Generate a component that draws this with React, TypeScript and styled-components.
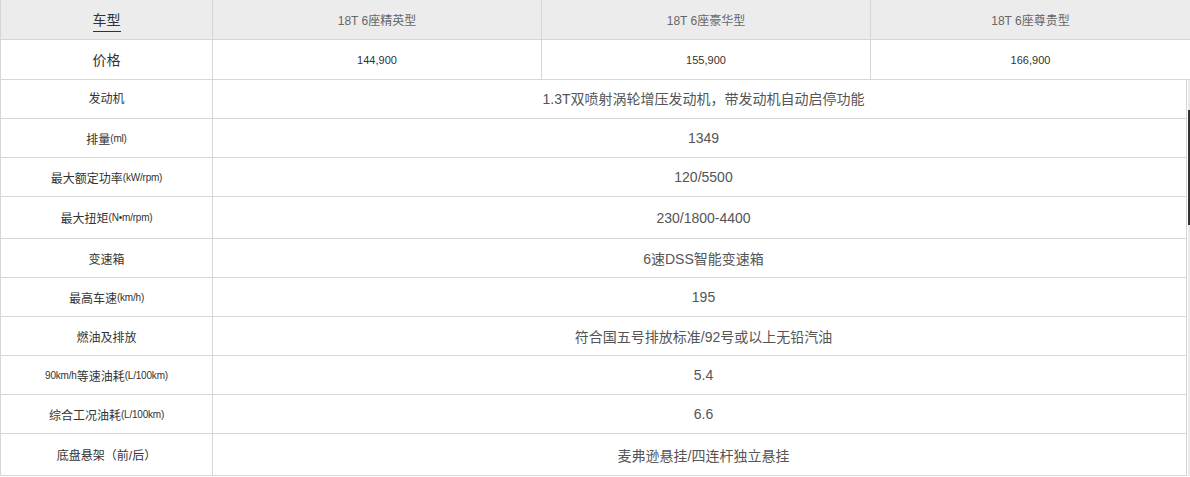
import React from "react";
import styled, { createGlobalStyle } from "styled-components";

const GlobalStyle = createGlobalStyle`
  html, body {
    margin: 0;
    padding: 0;
    background: #fff;
  }
  body {
    font-family: "Liberation Sans", "Noto Sans CJK SC", sans-serif;
    color: #333;
  }
`;

const COLS = "212px 329px 329px 1fr";

const StyledTable = styled.div`
  width: 1190px;
  border-left: 1px solid #d6d6d6;
  box-sizing: border-box;
`;

const StyledHeadRow = styled.div<{ shaded?: boolean }>`
  display: grid;
  grid-template-columns: ${COLS};
  height: 40px;
  box-sizing: border-box;
  border-bottom: 1px solid #d6d6d6;
  background: ${(props) => (props.shaded ? "#ececec" : "#fff")};
`;

const StyledHeadCell = styled.div<{ last?: boolean }>`
  display: flex;
  align-items: center;
  justify-content: center;
  border-right: ${(props) => (props.last ? "none" : "1px solid #d6d6d6")};
`;

const StyledTitle = styled.span`
  font-size: 14px;
  line-height: 18px;
  color: #333;
  border-bottom: 1px solid #333;
  padding-bottom: 2px;
  margin-top: 3px;
`;

const StyledLabelBig = styled.span`
  font-size: 14px;
  color: #333;
  margin-bottom: 2px;
`;

const StyledModel = styled.span`
  font-size: 12px;
  color: #666;
`;

const StyledPrice = styled.span`
  font-size: 11px;
  color: #333;
`;

const StyledBody = styled.div`
  display: flex;
`;

const StyledSpecList = styled.div`
  width: 1186px;
  border-right: 1px solid #d6d6d6;
`;

const StyledSpecRow = styled.div<{ tall?: boolean; raised?: boolean }>`
  display: grid;
  grid-template-columns: 212px 1fr;
  height: ${(props) => (props.tall ? 42 : 39)}px;
  box-sizing: border-box;
  border-bottom: 1px solid #d6d6d6;

  & > div {
    padding-bottom: ${(props) => (props.raised ? 3 : 0)}px;
  }
`;

const StyledSpecLabel = styled.div`
  display: flex;
  align-items: center;
  justify-content: center;
  border-right: 1px solid #d6d6d6;
  font-size: 12px;
  color: #333;
  white-space: nowrap;
`;

const StyledUnit = styled.span`
  font-size: 10px;
  letter-spacing: -0.2px;
`;

const StyledSpecValue = styled.div`
  display: flex;
  align-items: center;
  justify-content: center;
  font-size: 14px;
  color: #555;
  padding-left: 8px;
`;

const StyledTrack = styled.div`
  width: 3px;
  display: flex;
  justify-content: flex-end;
  background: linear-gradient(to right, #fff 0, #fff 1px, #ebebeb 1px);
`;

const StyledThumb = styled.div`
  width: 2px;
  height: 115px;
  margin-top: 30px;
  background: #333;
`;

type Spec = {
  label: React.ReactNode;
  value: string;
  tall?: boolean;
  raised?: boolean;
};

const specs: Spec[] = [
  {
    label: "发动机",
    value: "1.3T双喷射涡轮增压发动机，带发动机自动启停功能",
    raised: true,
  },
  {
    label: (
      <>
        排量<StyledUnit>(ml)</StyledUnit>
      </>
    ),
    value: "1349",
  },
  {
    label: (
      <>
        最大额定功率<StyledUnit>(kW/rpm)</StyledUnit>
      </>
    ),
    value: "120/5500",
  },
  {
    label: (
      <>
        最大扭矩<StyledUnit>(N•m/rpm)</StyledUnit>
      </>
    ),
    value: "230/1800-4400",
    tall: true,
  },
  { label: "变速箱", value: "6速DSS智能变速箱" },
  {
    label: (
      <>
        最高车速<StyledUnit>(km/h)</StyledUnit>
      </>
    ),
    value: "195",
  },
  { label: "燃油及排放", value: "符合国五号排放标准/92号或以上无铅汽油" },
  {
    label: (
      <>
        <StyledUnit>90km/h</StyledUnit>等速油耗<StyledUnit>(L/100km)</StyledUnit>
      </>
    ),
    value: "5.4",
  },
  {
    label: (
      <>
        综合工况油耗<StyledUnit>(L/100km)</StyledUnit>
      </>
    ),
    value: "6.6",
  },
  { label: "底盘悬架（前/后）", value: "麦弗逊悬挂/四连杆独立悬挂", tall: true },
];

const models = [
  { name: "18T 6座精英型", price: "144,900" },
  { name: "18T 6座豪华型", price: "155,900" },
  { name: "18T 6座尊贵型", price: "166,900" },
];

const App: React.FC = () => {
  return (
    <>
      <GlobalStyle />
      <StyledTable>
        <StyledHeadRow shaded>
          <StyledHeadCell>
            <StyledTitle>车型</StyledTitle>
          </StyledHeadCell>
          {models.map((m, i) => (
            <StyledHeadCell key={m.name} last={i === models.length - 1}>
              <StyledModel>{m.name}</StyledModel>
            </StyledHeadCell>
          ))}
        </StyledHeadRow>
        <StyledHeadRow>
          <StyledHeadCell>
            <StyledLabelBig>价格</StyledLabelBig>
          </StyledHeadCell>
          {models.map((m, i) => (
            <StyledHeadCell key={m.price} last={i === models.length - 1}>
              <StyledPrice>{m.price}</StyledPrice>
            </StyledHeadCell>
          ))}
        </StyledHeadRow>
        <StyledBody>
          <StyledSpecList>
            {specs.map((s) => (
              <StyledSpecRow key={s.value} tall={s.tall} raised={s.raised}>
                <StyledSpecLabel>{s.label}</StyledSpecLabel>
                <StyledSpecValue>{s.value}</StyledSpecValue>
              </StyledSpecRow>
            ))}
          </StyledSpecList>
          <StyledTrack>
            <StyledThumb />
          </StyledTrack>
        </StyledBody>
      </StyledTable>
    </>
  );
};

export default App;
